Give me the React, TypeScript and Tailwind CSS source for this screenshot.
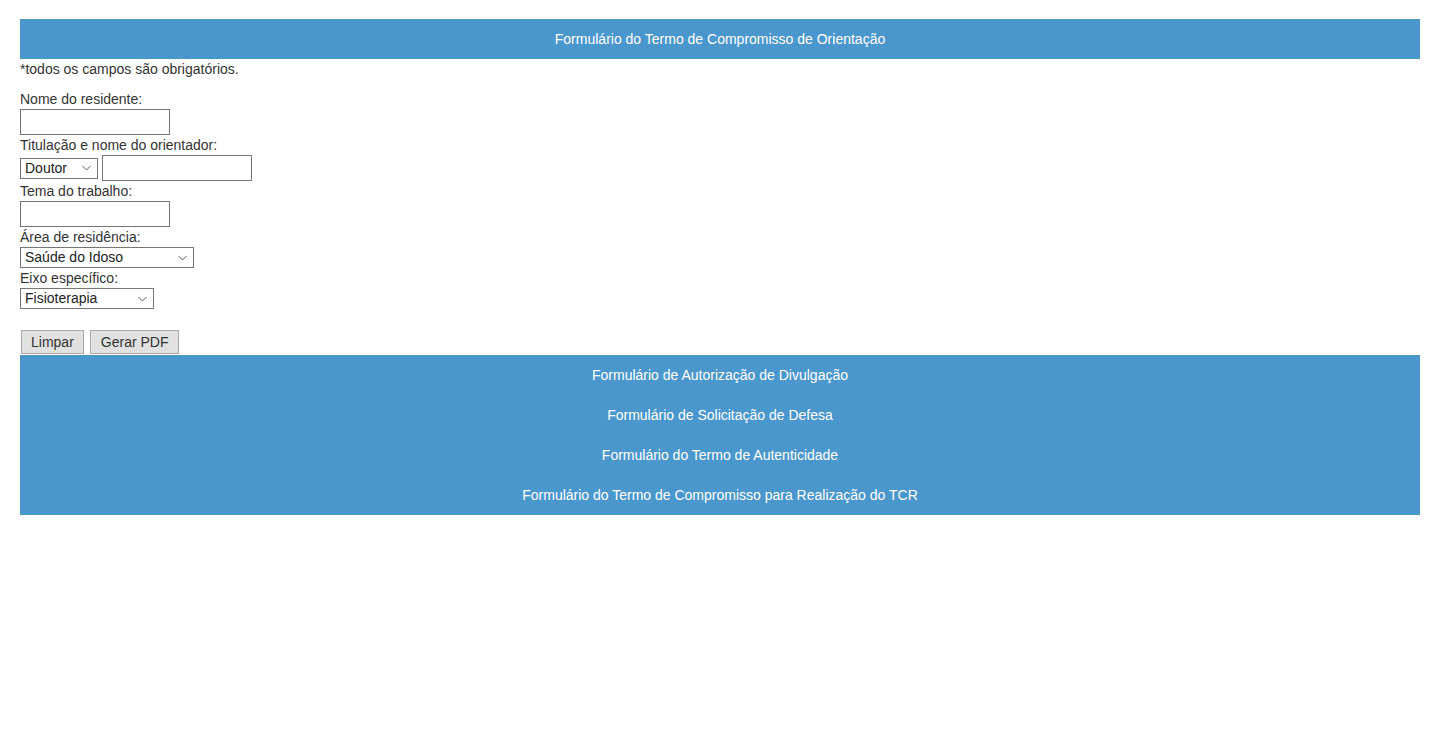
import React from 'react';

const otherForms = [
  'Formulário de Autorização de Divulgação',
  'Formulário de Solicitação de Defesa',
  'Formulário do Termo de Autenticidade',
  'Formulário do Termo de Compromisso para Realização do TCR',
];

function Chevron() {
  return (
    <svg
      className="pointer-events-none absolute right-[7px] top-1/2 -translate-y-1/2"
      width="9"
      height="5"
      viewBox="0 0 9 5"
      fill="none"
    >
      <path d="M0.5 0.5 L4.5 4.5 L8.5 0.5" stroke="#555" strokeWidth="1" />
    </svg>
  );
}

function Select({ value, options, width }: { value: string; options: string[]; width: string }) {
  return (
    <span className={`relative inline-block ${width}`}>
      <select
        defaultValue={value}
        className="h-[21px] w-full appearance-none border border-[#767676] bg-white pl-[4px] pr-5 text-[14px] leading-[19px] text-[#222]"
      >
        {options.map((o) => (
          <option key={o}>{o}</option>
        ))}
      </select>
      <Chevron />
    </span>
  );
}

function TextInput() {
  return <input type="text" className="h-[26px] w-[150px] border border-[#767676] bg-white px-1 text-[14px]" />;
}

export default function App() {
  return (
    <div className="min-h-[753px] bg-white px-[20px] pt-[19px] font-['Liberation_Sans',Arial,sans-serif] text-[14px] leading-[16px] text-[#333]">
      <div className="flex h-[40px] items-center justify-center bg-[#4a97cd] text-white">
        Formulário do Termo de Compromisso de Orientação
      </div>

      <p className="mt-[2px]">*todos os campos são obrigatórios.</p>

      <form className="mt-[14px] flex flex-col items-start">
        <label className="mb-[2px]">Nome do residente:</label>
        <TextInput />

        <label className="mt-[2px] mb-[2px]">Titulação e nome do orientador:</label>
        <div className="flex items-center gap-[4px]">
          <Select value="Doutor" options={['Doutor', 'Mestre', 'Especialista']} width="w-[78px]" />
          <TextInput />
        </div>

        <label className="mt-[2px] mb-[2px]">Tema do trabalho:</label>
        <TextInput />

        <label className="mt-[2px] mb-[2px]">Área de residência:</label>
        <Select value="Saúde do Idoso" options={['Saúde do Idoso', 'Saúde da Família', 'Saúde Mental']} width="w-[174px]" />

        <label className="mt-[2px] mb-[2px]">Eixo específico:</label>
        <Select value="Fisioterapia" options={['Fisioterapia', 'Enfermagem', 'Psicologia', 'Nutrição']} width="w-[134px]" />

        <div className="mt-[21px] flex gap-[6px] pl-[1px]">
          <button type="reset" className="h-[24px] border border-[#aaa] bg-[#e1e1e1] px-[9px] text-[14px] text-[#333]">
            Limpar
          </button>
          <button type="button" className="h-[24px] border border-[#aaa] bg-[#e1e1e1] px-[10px] text-[14px] text-[#333]">
            Gerar PDF
          </button>
        </div>
      </form>

      <div className="mt-[1px] flex flex-col bg-[#4a97cd] text-white">
        {otherForms.map((f) => (
          <div key={f} className="flex h-[40px] items-center justify-center">
            {f}
          </div>
        ))}
      </div>
    </div>
  );
}
